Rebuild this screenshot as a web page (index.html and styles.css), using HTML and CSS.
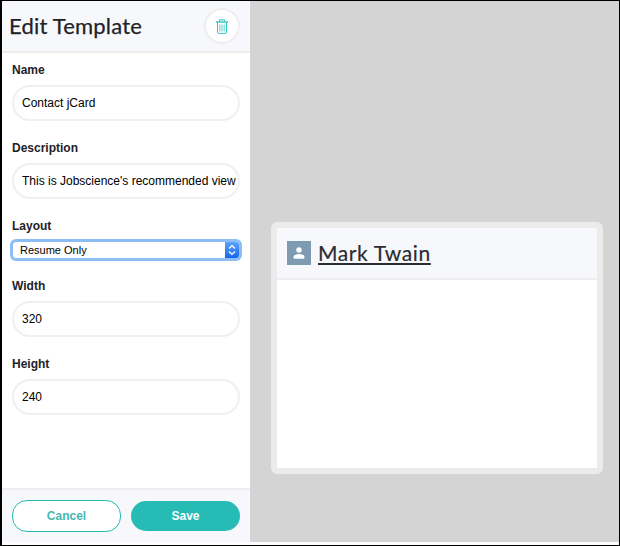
FILE: index.html
```html
<!DOCTYPE html>
<html lang="en">
<head>
  <meta charset="UTF-8">
  <title>Edit Template</title>
  <link rel="stylesheet" href="styles.css">
</head>
<body>
  <div class="window">
    <div class="main">
      <div class="sidebar">
        <div class="sidebar-header">
          <h1>Edit Template</h1>
          <button class="delete-button" title="Delete">
            <svg width="12" height="15" viewBox="0 0 12 15" fill="none" stroke="#2fc4be" stroke-width="1">
              <path d="M0 3h12" stroke-width="1.4"/>
              <path d="M3.5 2.5V0.8h5V2.5"/>
              <path d="M1.5 3.5v9.7a1.2 1.2 0 0 0 1.2 1.2h6.6a1.2 1.2 0 0 0 1.2-1.2V3.5"/>
              <path d="M3.8 5.5v7M6 5.5v7M8.2 5.5v7" stroke-width="1.1" opacity="0.75"/>
            </svg>
          </button>
        </div>
        <div class="sidebar-body">
          <div class="form-group">
            <label for="name">Name</label>
            <input type="text" id="name" value="Contact jCard">
          </div>
          <div class="form-group">
            <label for="description">Description</label>
            <input type="text" id="description" value="This is Jobscience's recommended view for contacts">
          </div>
          <div class="form-group">
            <label for="layout">Layout</label>
            <div class="fake-select" id="layout">
              <span>Resume Only</span>
              <span class="select-arrows">
                <svg width="8" height="12" viewBox="0 0 8 12" fill="none" stroke="#fff" stroke-width="1.4">
                  <path d="M1 4.4 4 1.6l3 2.8"/>
                  <path d="M1 7.6l3 2.8 3-2.8"/>
                </svg>
              </span>
            </div>
          </div>
          <div class="form-group">
            <label for="width">Width</label>
            <input type="text" id="width" value="320">
          </div>
          <div class="form-group">
            <label for="height">Height</label>
            <input type="text" id="height" value="240">
          </div>
        </div>
        <div class="sidebar-footer">
          <button class="btn btn-cancel">Cancel</button>
          <button class="btn btn-save">Save</button>
        </div>
      </div>
      <div class="preview">
        <div class="card">
          <div class="card-header">
            <span class="avatar">
              <svg width="12" height="12" viewBox="0 0 12 12" fill="#fff">
                <circle cx="6" cy="3" r="2.7"/>
                <path d="M0.5 10.2C0.5 8.2 3 7 6 7s5.500 1.200 5.500 3.200c0 1-.6 1.500-1.500 1.500H2c-.9 0-1.500-.5-1.500-1.500z"/>
              </svg>
            </span>
            <a href="#" class="card-title">Mark Twain</a>
          </div>
          <div class="card-body"></div>
        </div>
      </div>
    </div>
  </div>
</body>
</html>
```

FILE: styles.css
```css
* {
  box-sizing: border-box;
}

body {
  margin: 0;
  font-family: "Liberation Sans", Arial, sans-serif;
  color: #1f2229;
}

.window {
  width: 620px;
  height: 546px;
  border: 1px solid #000;
  border-left-width: 2px;
  background-color: #fff;
  padding-bottom: 3px;
}

.main {
  display: flex;
  height: 100%;
  background-color: #d4d4d4;
}

.sidebar {
  width: 248px;
  display: flex;
  flex-direction: column;
  background-color: #fff;
}

.sidebar-header {
  height: 52px;
  display: flex;
  align-items: center;
  justify-content: space-between;
  padding: 0 10px 0 7px;
  background-color: #f7f8fb;
  border-bottom: 2px solid #eeeeee;
}

h1 {
  margin: 0 0 2px;
  font-family: Lato, sans-serif;
  font-size: 22px;
  font-weight: 400;
  letter-spacing: 0.2px;
  -webkit-text-stroke: 0.25px #1f2229;
}

.delete-button {
  width: 36px;
  height: 36px;
  display: flex;
  align-items: center;
  justify-content: center;
  padding: 0;
  border: 2px solid #eeeeee;
  border-radius: 50%;
  background-color: #fff;
}

.sidebar-body {
  flex: 1;
  padding: 10px 10px 0;
}

.form-group {
  margin-bottom: 20px;
}

label {
  display: block;
  margin-bottom: 8px;
  font-size: 12px;
  line-height: 14px;
  font-weight: bold;
}

input {
  display: block;
  width: 100%;
  height: 36px;
  padding: 0 0 0 8px;
  border: 2px solid #f0f0f4;
  border-radius: 18px;
  font-family: "Liberation Sans", Arial, sans-serif;
  font-size: 12px;
  color: #000;
  background-color: #fff;
}

.fake-select {
  height: 18px;
  display: flex;
  align-items: center;
  justify-content: space-between;
  padding-left: 7px;
  border-radius: 4px;
  font-size: 11px;
  color: #000;
  background-color: #fff;
  border: 1px solid #8dbdf5;
  box-shadow: 0 0 0 2px #8dbdf5;
}

.select-arrows {
  width: 14px;
  height: 16px;
  display: flex;
  align-items: center;
  justify-content: center;
  border-radius: 0 3px 3px 0;
  background: linear-gradient(#5aa3fb, #1467ee);
}

.sidebar-footer {
  height: 54px;
  display: flex;
  align-items: center;
  gap: 10px;
  padding: 0 10px;
  background-color: #f7f8fb;
  border-top: 2px solid #eeeeee;
}

.btn {
  width: 109px;
  height: 30px;
  border-radius: 15px;
  font-family: "Liberation Sans", Arial, sans-serif;
  font-size: 12px;
  font-weight: bold;
}

.btn-cancel {
  height: 32px;
  color: #45b8b3;
  background-color: #fff;
  border: 1px solid #26bbb5;
}

.btn-save {
  color: #fff;
  background-color: #26bbb5;
  border: none;
}

.preview {
  flex: 1;
  display: flex;
  align-items: flex-start;
  justify-content: center;
  padding-left: 4px;
  padding-top: 221px;
  border-left: 1px solid #d4d4d4;
}

.card {
  width: 332px;
  height: 252px;
  display: flex;
  flex-direction: column;
  border: 6px solid #ebebeb;
  border-radius: 6px;
  background-color: #fff;
}

.card-header {
  height: 52px;
  display: flex;
  align-items: center;
  gap: 7px;
  padding-left: 10px;
  background-color: #f7f8fb;
  border-bottom: 2px solid #eeeeee;
}

.avatar {
  width: 24px;
  height: 24px;
  display: flex;
  align-items: center;
  justify-content: center;
  background-color: #7f9bb1;
}

.card-title {
  margin-bottom: 2px;
  font-family: Lato, sans-serif;
  font-size: 21px;
  letter-spacing: 0.6px;
  color: #2b2d33;
  -webkit-text-stroke: 0.2px #2b2d33;
}

.card-body {
  flex: 1;
}
```
